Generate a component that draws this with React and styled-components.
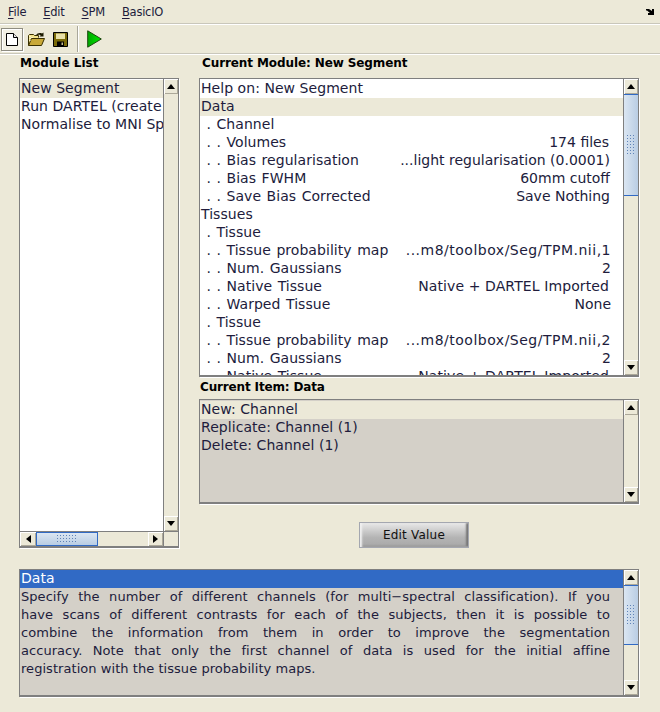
import React from "react";
import styled, { createGlobalStyle } from "styled-components";

const Global = createGlobalStyle`
  html, body { margin: 0; padding: 0; background: #ece9d8; }
  body { font-family: "DejaVu Sans", sans-serif; color: #211c3c; overflow: hidden; }
`;

const Frame = styled.div`
  width: 660px; height: 712px; display: flex; flex-direction: column; background: #ece9d8; overflow: hidden;
  & > * { flex: none; }
`;
const MenuBar = styled.div`
  height: 23px; display: flex; align-items: center; justify-content: space-between;
  padding: 0 6px 0 8px; border-bottom: 1px solid #c9c7bb; box-shadow: 0 1px 0 #fff;
`;
const MenuItems = styled.div`display: flex; gap: 17px; font-size: 11.5px; letter-spacing: -0.25px;`;
const MenuLabel = styled.span`& u { text-underline-offset: 2px; }`;
const ToolBar = styled.div`
  height: 28px; margin-top: 1px; display: flex; align-items: center; padding-left: 1px; gap: 2px;
  border-bottom: 1px solid #c9c7bb; box-shadow: 0 1px 0 #fff;
`;
const ToolButton = styled.div`
  width: 22px; height: 23px; display: flex; align-items: center; justify-content: center; box-sizing: border-box;
  border: 1px solid ${p => (p.$active ? "#8f8d82" : "transparent")};
  box-shadow: ${p => (p.$active ? "inset 1px 1px 0 #fff, 1px 1px 0 #fff" : "none")};
  background: ${p => (p.$active ? "#f2f0e4" : "transparent")};
`;
const ToolSep = styled.div`width: 1px; height: 26px; background: #a9a79a; box-shadow: 1px 0 0 #fff; margin: 0 3px 0 4px;`;

const Main = styled.div`
  display: grid; grid-template-columns: 160px 440px; column-gap: 20px; padding-left: 19px; margin-top: 1px;
`;
const Column = styled.div`display: flex; flex-direction: column;`;
const Title = styled.div`
  font-weight: 700; font-size: 12px; box-sizing: border-box; color: #000; line-height: 17px;
  height: ${p => p.$h || 22}px; padding-top: ${p => p.$top || 0}px; padding-left: ${p => p.$indent || 1}px;
  letter-spacing: ${p => p.$ls || 0}px;
`;
const Panel = styled.div`
  box-sizing: border-box; height: ${p => p.$h}px; width: ${p => p.$w ? `${p.$w}px` : "100%"};
  border-style: solid; border-color: #7f7f7f; border-width: 1px 1px 2px 1px; box-shadow: 1px 1px 0 #fff;
  display: grid; grid-template-columns: minmax(0, 1fr) 15px; grid-template-rows: ${p => (p.$hscroll ? "minmax(0, 1fr) 15px" : "minmax(0, 1fr)")};
  background: ${p => p.$bg || "#fff"}; overflow: hidden;
`;
const Rows = styled.div`overflow: hidden; padding-top: 1px; min-width: 0;`;
const Row = styled.div`
  height: 18px; line-height: 16px; font-size: 14px; padding: 0 ${p => p.$pr ?? 12}px 0 1px; display: flex; justify-content: space-between;
  white-space: nowrap; overflow: hidden; letter-spacing: 0.05px;
  background: ${p => (p.$selected ? "#ece9d8" : p.$blue ? "#316ac5" : "transparent")};
  color: ${p => (p.$blue ? "#fff" : "inherit")};
`;
const RowLabel = styled.span`white-space: pre; word-spacing: ${p => (p.$tree ? 1 : 0)}px;`;
const RowValue = styled.span`letter-spacing: ${p => p.$ls || 0}px; margin-right: ${p => p.$mr || 0}px;`;
const HelpLine = styled.div`
  font-size: 13px; line-height: 18px; height: 18px; padding: 0 13px 0 1px; text-align: justify;
  text-align-last: ${p => (p.$last ? "left" : "justify")}; overflow: hidden; letter-spacing: 0.05px;
`;

const Scroll = styled.div`
  display: flex; flex-direction: ${p => (p.$h ? "row" : "column")}; background: #ece9d8; box-sizing: border-box;
  ${p => (p.$h ? "border-top: 1px solid #7f7f7f;" : "border-left: 1px solid #7f7f7f;")} min-height: 0; min-width: 0;
`;
const Arrow = styled.div`
  flex: 0 0 ${p => p.$size || 15}px; display: flex; align-items: center; justify-content: center; background: #ece9d8;
  box-shadow: inset 1px 1px 0 #fff, inset -1px -1px 0 #aca899;
  & i { width: 0; height: 0; display: block; border: 4px solid transparent; }
  & i.up { border-bottom: 5px solid #000; border-top: 0; }
  & i.down { border-top: 5px solid #000; border-bottom: 0; }
  & i.left { border-right: 5px solid #000; border-left: 0; }
  & i.right { border-left: 5px solid #000; border-right: 0; }
`;
const Track = styled.div`flex: 1 1 0; min-width: 0; min-height: 0;`;
const Thumb = styled.div`
  flex: 0 0 ${p => p.$size}px; box-sizing: border-box; border: 1px solid #316ac5; border-width: ${p => (p.$h ? "1px" : "1px 0")};
  background: linear-gradient(${p => (p.$h ? "180deg" : "90deg")}, #dbe6f2, #b9cde4);
  display: flex; align-items: center; justify-content: center;
`;
const Grip = styled.div`
  width: ${p => (p.$h ? 22 : 10)}px; height: ${p => (p.$h ? 10 : 22)}px;
  background-image: radial-gradient(#5f83b8 0.8px, transparent 1px); background-size: 3px 3px;
`;
const Corner = styled.div`background: #ece9d8; border-top: 1px solid #7f7f7f; border-left: 1px solid #7f7f7f;`;

const VScroll = ({ thumb }) => (
  <Scroll>
    <Arrow><i className="up" /></Arrow>
    {thumb ? <Thumb $size={thumb}><Grip /></Thumb> : null}
    <Track />
    <Arrow><i className="down" /></Arrow>
  </Scroll>
);

const ButtonWrap = styled.div`display: flex; padding: 18px 0 0 160px;`;
const EditButton = styled.div`
  width: 110px; height: 26px; box-sizing: border-box; display: flex; align-items: center; justify-content: center;
  font-size: 12px; color: #111; border: 1px solid #a4a7b0; letter-spacing: 0.2px;
  background: linear-gradient(180deg, #e8e8e8 0%, #b4b4b4 60%, #a8a8a8 100%);
  box-shadow: inset 2px 0 2px #f0f0f0, inset -2px -1px 2px #777;
`;
const HelpWrap = styled.div`padding: 21px 0 0 19px;`;
const HelpBody = styled.div`overflow: hidden; min-width: 0;`;

const mainRows = [
  ["Help on: New Segment"],
  ["Data", "", true],
  [" . Channel"],
  [" . . Volumes", "174 files", false, 0, 2],
  [" . . Bias regularisation", "...light regularisation (0.0001)", false, 0, 1],
  [" . . Bias FWHM", "60mm cutoff", false, 0, 1],
  [" . . Save Bias Corrected", "Save Nothing", false, 0, 1],
  ["Tissues"],
  [" . Tissue"],
  [" . . Tissue probability map", "...m8/toolbox/Seg/TPM.nii,1", false, 0.5, 0],
  [" . . Num. Gaussians", "2"],
  [" . . Native Tissue", "Native + DARTEL Imported", false, 0.1, 2],
  [" . . Warped Tissue", "None"],
  [" . Tissue"],
  [" . . Tissue probability map", "...m8/toolbox/Seg/TPM.nii,2", false, 0.5, 0],
  [" . . Num. Gaussians", "2"],
  [" . . Native Tissue", "Native + DARTEL Imported", false, 0.1, 2],
];
const helpLines = [
  "Specify the number of different channels (for multi\u2212spectral classification). If you",
  "have scans of different contrasts for each of the subjects, then it is possible to",
  "combine the information from them in order to improve the segmentation",
  "accuracy. Note that only the first channel of data is used for the initial affine",
];

export default function App() {
  return (
    <Frame>
      <Global />
      <MenuBar>
        <MenuItems>
          <MenuLabel><u>F</u>ile</MenuLabel>
          <MenuLabel><u>E</u>dit</MenuLabel>
          <MenuLabel><u>S</u>PM</MenuLabel>
          <MenuLabel><u>B</u>asicIO</MenuLabel>
        </MenuItems>
        <svg width="8" height="6" viewBox="0 0 8 6"><path d="M0 0h3l3 2V0h2v6H2V4h2L1 1.500H0z" fill="#000" /></svg>
      </MenuBar>
      <ToolBar>
        <ToolButton $active>
          <svg width="12" height="13" viewBox="0 0 12 13"><path d="M.5.5h7l4 4v8h-11z" fill="#fff" stroke="#000" /><path d="M7.500.5v4h4" fill="#e8e8e8" stroke="#000" /></svg>
        </ToolButton>
        <ToolButton>
          <svg width="17" height="14" viewBox="0 0 17 14"><path d="M.5 13.500V3.500l1-1h4l1 1h4v2" fill="#f3e38a" stroke="#3a3000" /><path d="M.5 13.500l3-7h13l-3 7z" fill="#c8a838" stroke="#3a3000" /><path d="M1.500 4h1v1h-1zM3.500 5h1v1h-1zM1.500 6h1v1h-1zM1.500 8h1v1h-1z" fill="#fff" /><path d="M8 3.500C9 1 12 .5 14 1.500l1.500-1v4h-4l1.200-1.200C11 2.600 9.500 2.800 8 3.500z" fill="#1a1a00" /></svg>
        </ToolButton>
        <ToolButton>
          <svg width="15" height="15" viewBox="0 0 15 15"><path d="M.5.5h14v14H.5z" fill="#7a6a08" stroke="#000" /><path d="M3 1.500h9v5.500H3z" fill="#e8e0a8" /><path d="M4 9.500h7v5H4z" fill="#000" /><path d="M8.500 10.500h1.500V13H8.500z" fill="#c8c090" /></svg>
        </ToolButton>
        <ToolSep />
        <ToolButton>
          <svg width="15" height="18" viewBox="0 0 15 18">
            <defs><linearGradient id="playFill" x1="0" y1="0" x2="1" y2="0"><stop offset="0" stopColor="#00a800" /><stop offset="1" stopColor="#00e800" /></linearGradient></defs>
            <path d="M.7.8 14.300 9 .7 17.200z" fill="url(#playFill)" stroke="#1e4a10" />
          </svg>
        </ToolButton>
      </ToolBar>
      <Main>
        <Column>
          <Title $h={23} $indent={1}>Module List</Title>
          <Panel $h={470} $hscroll>
            <Rows>
              <Row $selected $pr={0}>New Segment</Row>
              <Row $pr={0}>Run DARTEL (create Templates)</Row>
              <Row $pr={0}>Normalise to MNI Space</Row>
            </Rows>
            <VScroll />
            <Scroll $h>
              <Arrow $size={16}><i className="left" /></Arrow>
              <Thumb $size={62} $h><Grip $h /></Thumb>
              <Track />
              <Arrow $size={15}><i className="right" /></Arrow>
            </Scroll>
            <Corner />
          </Panel>
        </Column>
        <Column>
          <Title $h={23} $indent={3} $ls={-0.1}>Current Module: New Segment</Title>
          <Panel $h={299}>
            <Rows>
              {mainRows.map((r, i) => (
                <Row key={i} $selected={r[2]} $pr={12}>
                  <RowLabel $tree={r[0].startsWith(" ")}>{r[0]}</RowLabel>
                  {r[1] ? <RowValue $ls={r[3]} $mr={r[4]}>{r[1]}</RowValue> : null}
                </Row>
              ))}
            </Rows>
            <VScroll thumb={102} />
          </Panel>
          <Title $h={22} $top={2} $indent={1} $ls={-0.15}>Current Item: Data</Title>
          <Panel $h={105} $bg="#d4d0c8">
            <Rows>
              <Row $selected>New: Channel</Row>
              <Row>Replicate: Channel (1)</Row>
              <Row>Delete: Channel (1)</Row>
            </Rows>
            <VScroll />
          </Panel>
          <ButtonWrap>
            <EditButton>Edit Value</EditButton>
          </ButtonWrap>
        </Column>
      </Main>
      <HelpWrap>
        <Panel $w={620} $h={128} $bg="#d4d0c8">
          <HelpBody>
            <Row $blue $pr={0}>Data</Row>
            {helpLines.map(l => <HelpLine key={l}>{l}</HelpLine>)}
            <HelpLine $last>registration with the tissue probability maps.</HelpLine>
          </HelpBody>
          <VScroll thumb={60} />
        </Panel>
      </HelpWrap>
    </Frame>
  );
}
